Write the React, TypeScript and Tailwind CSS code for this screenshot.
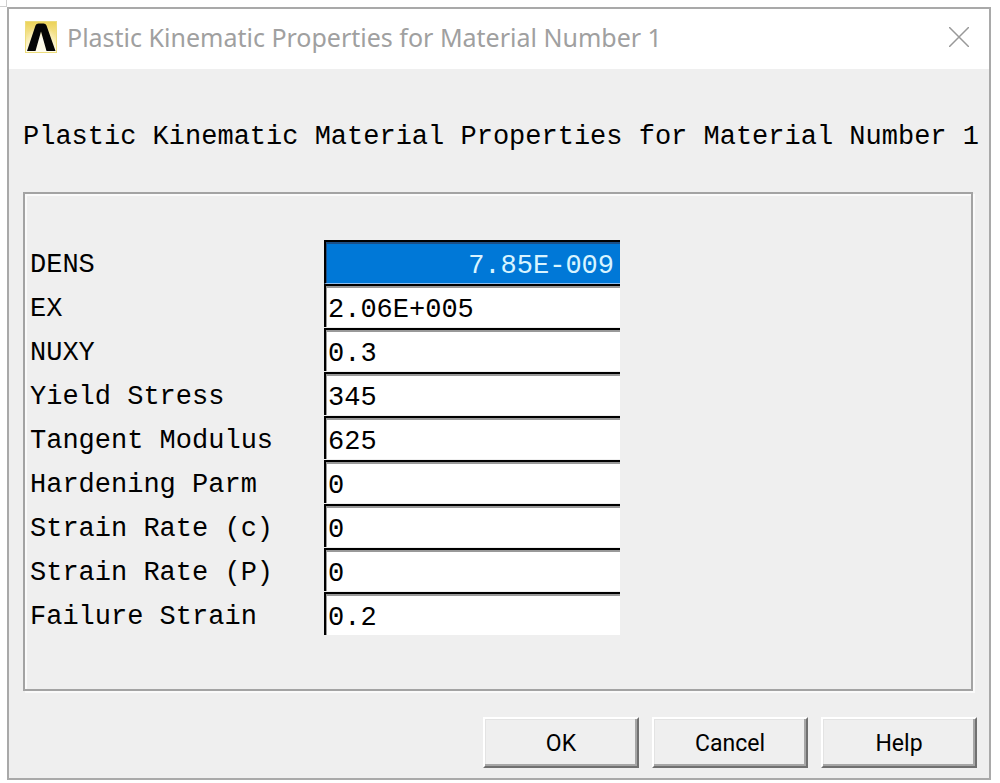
import { useState, FormEvent } from 'react';
import clsx from 'clsx';

const initialFields = [
  { id: 'dens', label: 'DENS', value: '7.85E-009' },
  { id: 'ex', label: 'EX', value: '2.06E+005' },
  { id: 'nuxy', label: 'NUXY', value: '0.3' },
  { id: 'yield', label: 'Yield Stress', value: '345' },
  { id: 'tangent', label: 'Tangent Modulus', value: '625' },
  { id: 'hardening', label: 'Hardening Parm', value: '0' },
  { id: 'rate-c', label: 'Strain Rate (c)', value: '0' },
  { id: 'rate-p', label: 'Strain Rate (P)', value: '0' },
  { id: 'failure', label: 'Failure Strain', value: '0.2' },
];

function AppLogo() {
  return (
    <svg viewBox="0 0 32 32" className="h-8 w-8 shrink-0" aria-hidden="true">
      <defs>
        <linearGradient id="logo-bg" x1="0" y1="0" x2="0" y2="1">
          <stop offset="0" stopColor="#ecd257" />
          <stop offset="0.5" stopColor="#f6e69a" />
          <stop offset="1" stopColor="#fffdf0" />
        </linearGradient>
        <radialGradient id="logo-glow" cx="0.5" cy="0.6" r="0.5">
          <stop offset="0" stopColor="#fff" stopOpacity="0.9" />
          <stop offset="1" stopColor="#fff" stopOpacity="0" />
        </radialGradient>
      </defs>
      <rect x="0.5" y="0.5" width="31" height="31" fill="url(#logo-bg)" stroke="#ecdc7c" />
      <rect x="1" y="1" width="30" height="30" fill="url(#logo-glow)" />
      <path d="M2 30 10.500 4.500Q11.300 2.500 13.500 2.500H18.500Q20.700 2.500 21.500 4.500L30.500 30H21.500L16 10.500 10.500 30Z" fill="#050505" />
    </svg>
  );
}

function DialogButton({ label, type = 'button' }: { label: string; type?: 'button' | 'submit' }) {
  return (
    <button
      type={type}
      className="h-[51px] w-[156px] border-2 border-t-white border-l-white border-r-[#707070] border-b-[#707070] bg-[#efefef] pt-0.5 font-['Roboto',sans-serif] text-[23px] leading-7 text-black shadow-[inset_-2px_-2px_0_#a6a6a6,inset_1px_1px_0_#e3e3e3]"
    >
      {label}
    </button>
  );
}

export default function App() {
  const [fields, setFields] = useState(initialFields);
  const [selected, setSelected] = useState('dens');

  const handleChange = (id: string, value: string) => {
    setFields(fields.map((f) => (f.id === id ? { ...f, value } : f)));
  };

  const handleSubmit = (e: FormEvent) => {
    e.preventDefault();
  };

  return (
    <div className="flex min-h-screen flex-col bg-white pb-[3px]">
      {/* Edge of the sheet behind the dialog */}
      <div className="h-[7px] w-[7px] border-r border-b border-[#cfcfcf]" />

      <div className="mr-[9px] ml-[7px] flex flex-1 flex-col border-2 border-[#a9a9a9] bg-[#efefef]">
        {/* Title bar */}
        <header className="flex h-15 items-center bg-white pr-5 pb-1 pl-4">
          <AppLogo />
          <h1 className="ml-2.5 flex-1 font-['Noto_Sans',sans-serif] text-[25px] leading-8 whitespace-nowrap text-[#a0a0a0]">
            Plastic Kinematic Properties for Material Number 1
          </h1>
          <button type="button" aria-label="Close" className="text-[#999]">
            <svg viewBox="0 0 20 20" className="h-5 w-5" fill="none" stroke="currentColor" strokeWidth="1.5">
              <path d="M0 0 20 20M20 0 0 20" />
            </svg>
          </button>
        </header>

        <form
          onSubmit={handleSubmit}
          className="flex flex-1 flex-col pr-3 pb-2.5 pl-3.5 font-['Liberation_Mono',monospace] text-[27px] leading-8 text-black"
        >
          <h2 className="mt-[52px] whitespace-nowrap">
            Plastic Kinematic Material Properties for Material Number 1
          </h2>

          {/* Etched frame */}
          <div className="mt-[39px] mr-1 flex-1 border-2 border-[#a3a3a3] pt-[46px] pl-[5px] shadow-[inset_2px_2px_0_#fafafa,2px_2px_0_#fafafa]">
            {fields.map((f) => {
              const active = f.id === selected;
              return (
                <div key={f.id} className="flex h-11">
                  <label htmlFor={f.id} className="w-[294px] shrink-0 pt-[9px]">
                    {f.label}
                  </label>
                  <input
                    id={f.id}
                    type="text"
                    value={f.value}
                    onChange={(e) => handleChange(f.id, e.target.value)}
                    onFocus={() => setSelected(f.id)}
                    className={clsx(
                      'w-[296px] rounded-none border-t-2 border-l-2 border-black pt-1.5 outline-none',
                      active
                        ? 'h-11 border-b border-b-[#8fbff0] bg-[#0078d7] pr-1.5 text-right text-[#d8f4ff] shadow-[inset_1px_2px_0_#1b4f86]'
                        : 'h-[43px] bg-white pl-0.5 shadow-[inset_1px_2px_0_#999]'
                    )}
                  />
                </div>
              );
            })}
          </div>

          <div className="mt-[26px] flex justify-end gap-[13px]">
            <DialogButton label="OK" type="submit" />
            <DialogButton label="Cancel" />
            <DialogButton label="Help" />
          </div>
        </form>
      </div>
    </div>
  );
}
